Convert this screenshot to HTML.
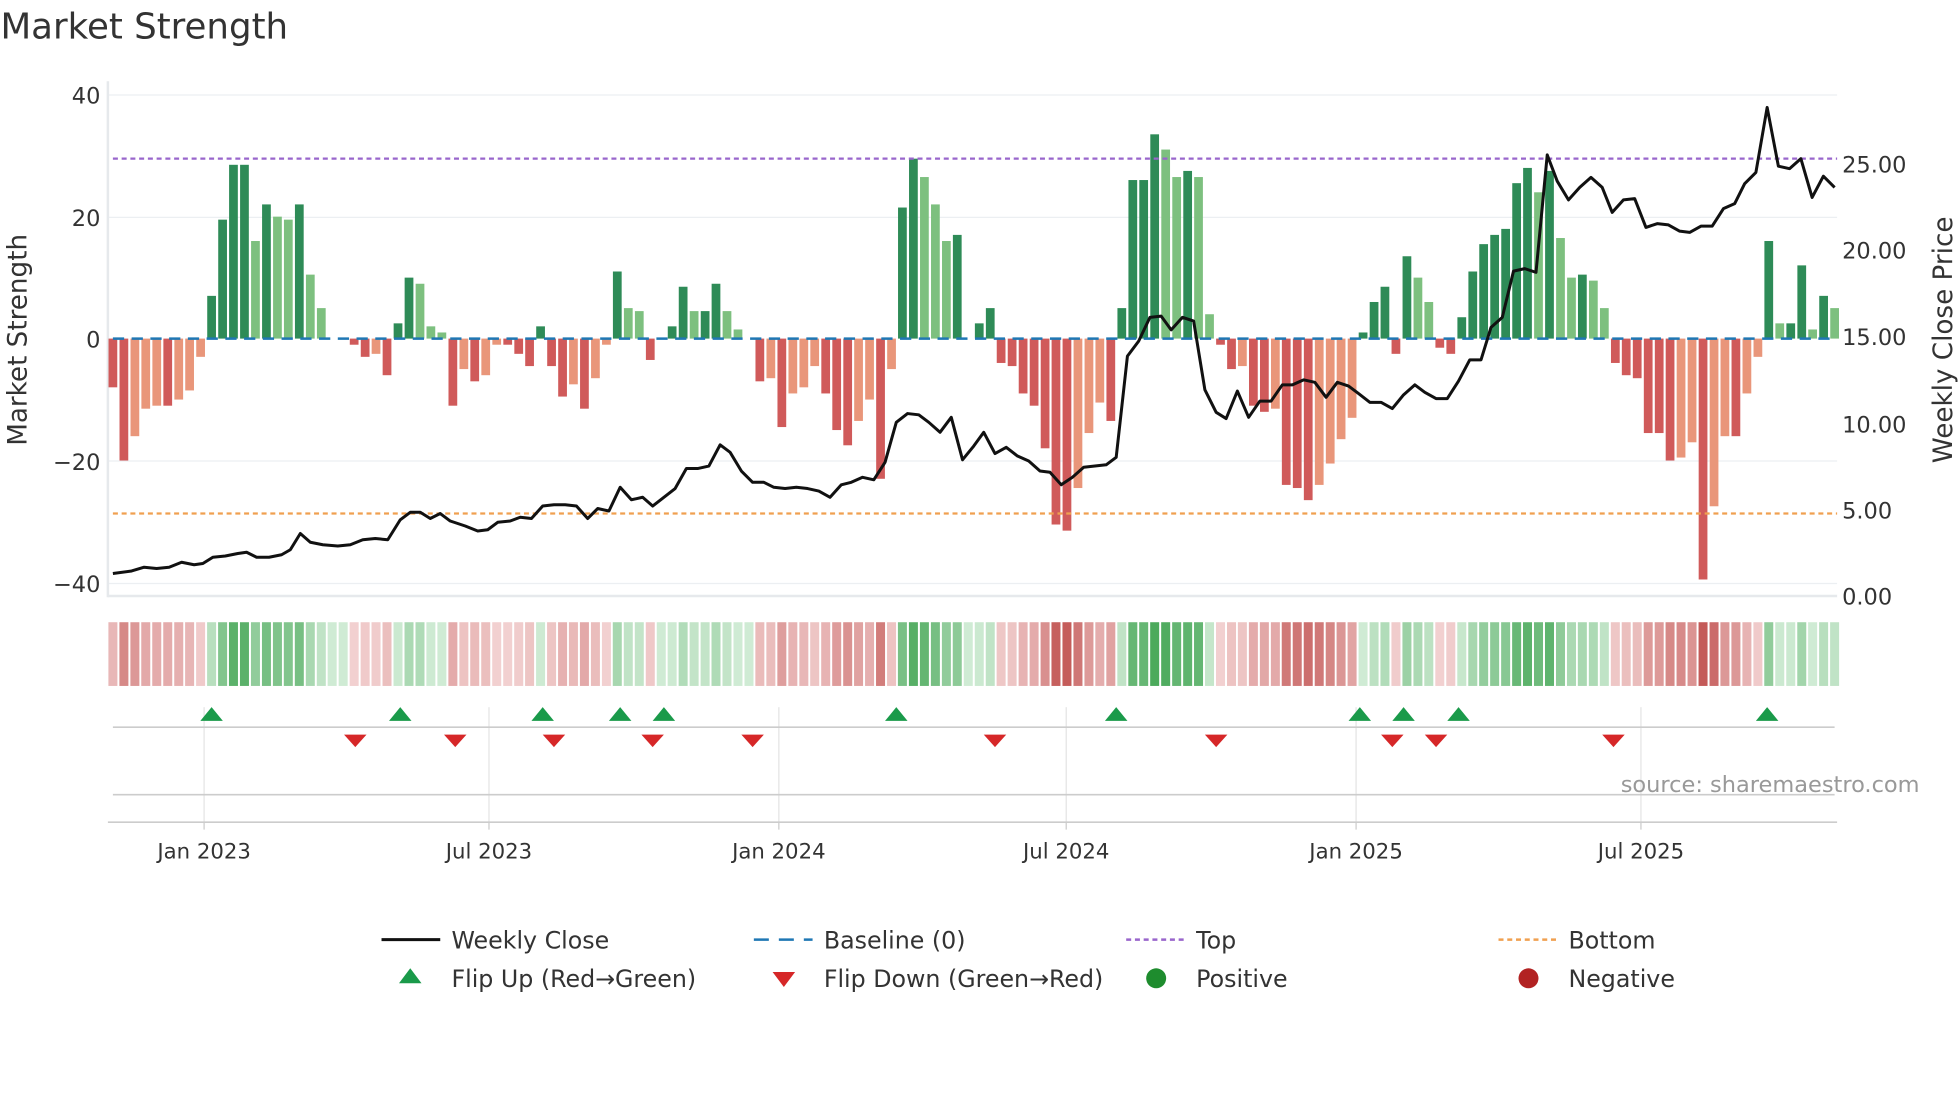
<!DOCTYPE html>
<html><head><meta charset="utf-8"><style>
html,body{margin:0;padding:0;background:#fff;width:1960px;height:1102px;overflow:hidden}
svg{display:block}
text{font-family:"DejaVu Sans","Liberation Sans",sans-serif}
</style></head><body>
<svg id="s" width="1960" height="1102" viewBox="0 0 1568 882" xmlns="http://www.w3.org/2000/svg">
<rect width="1568" height="882" fill="#fff"/>
<text x="0" y="31" font-size="28.5" fill="#333">Market Strength</text>
<g stroke="#eceff2" stroke-width="1">
<line x1="86" y1="76" x2="1470" y2="76"/><line x1="86" y1="174" x2="1470" y2="174"/>
<line x1="86" y1="369" x2="1470" y2="369"/><line x1="86" y1="467" x2="1470" y2="467"/>
<line x1="86" y1="477" x2="1470" y2="477" stroke="#e6e9ec" stroke-width="2"/>
<line x1="86" y1="65" x2="86" y2="478" stroke="#e6e9ec" stroke-width="2"/>
</g>
<g font-size="18" fill="#333" text-anchor="end">
<text x="80" y="83">40</text><text x="80" y="181">20</text><text x="80" y="278">0</text>
<text x="80" y="376">−20</text><text x="80" y="474">−40</text>
</g>
<g font-size="18" fill="#333">
<text x="1474" y="138">25.00</text><text x="1474" y="207">20.00</text><text x="1474" y="276">15.00</text>
<text x="1474" y="346">10.00</text><text x="1474" y="415">5.00</text><text x="1474" y="484">0.00</text>
</g>
<text transform="translate(21,272) rotate(-90)" font-size="21" fill="#333" text-anchor="middle">Market Strength</text>
<text transform="translate(1562,272) rotate(-90)" font-size="21" fill="#333" text-anchor="middle">Weekly Close Price</text>
<g id="bars"></g>
<line x1="90" y1="271" x2="1470" y2="271" stroke="#1f77b4" stroke-width="2" stroke-dasharray="9,6"/>
<line x1="90" y1="127" x2="1470" y2="127" stroke="#9966cc" stroke-width="1.8" stroke-dasharray="4,3"/>
<line x1="90" y1="411" x2="1470" y2="411" stroke="#f0a050" stroke-width="1.8" stroke-dasharray="4,3"/>
<polyline id="price" fill="none" stroke="#111" stroke-width="2.4" stroke-linejoin="round"/>
<g id="heat"></g>
<g stroke="#e4e4e4" stroke-width="1">
<line x1="163" y1="566" x2="163" y2="658"/><line x1="391" y1="566" x2="391" y2="658"/>
<line x1="623" y1="566" x2="623" y2="658"/><line x1="853" y1="566" x2="853" y2="658"/>
<line x1="1085" y1="566" x2="1085" y2="658"/><line x1="1313" y1="566" x2="1313" y2="658"/>
</g>
<line x1="90" y1="582" x2="1468" y2="582" stroke="#ccc" stroke-width="1.3"/>
<line x1="90" y1="636" x2="1468" y2="636" stroke="#ccc" stroke-width="1.3"/>
<line x1="86" y1="658" x2="1470" y2="658" stroke="#ccc" stroke-width="1.3"/>
<g id="flips"></g>
<text x="1536" y="634" font-size="18" fill="#999" text-anchor="end">source: sharemaestro.com</text>
<g font-size="17" fill="#333" text-anchor="middle">
<text x="163" y="687">Jan 2023</text><text x="391" y="687">Jul 2023</text><text x="623" y="687">Jan 2024</text>
<text x="853" y="687">Jul 2024</text><text x="1085" y="687">Jan 2025</text><text x="1313" y="687">Jul 2025</text>
</g>
<g stroke="#ccc"><line x1="163" y1="658" x2="163" y2="664"/><line x1="391" y1="658" x2="391" y2="664"/><line x1="623" y1="658" x2="623" y2="664"/><line x1="853" y1="658" x2="853" y2="664"/><line x1="1085" y1="658" x2="1085" y2="664"/><line x1="1313" y1="658" x2="1313" y2="664"/></g>
<g font-size="19" fill="#333">
<line x1="305" y1="752" x2="352" y2="752" stroke="#111" stroke-width="2.4"/><text x="361" y="759">Weekly Close</text>
<line x1="603" y1="752" x2="650" y2="752" stroke="#1f77b4" stroke-width="2" stroke-dasharray="12,8"/><text x="659" y="759">Baseline (0)</text>
<line x1="901" y1="752" x2="948" y2="752" stroke="#9966cc" stroke-width="2" stroke-dasharray="4,3"/><text x="957" y="759">Top</text>
<line x1="1199" y1="752" x2="1246" y2="752" stroke="#f0a050" stroke-width="2" stroke-dasharray="4,3"/><text x="1255" y="759">Bottom</text>
<polygon points="328,775 319,787 337,787" fill="#1a9a4a"/><text x="361" y="790">Flip Up (Red→Green)</text>
<polygon points="618,778 636,778 627,790" fill="#d62728"/><text x="659" y="790">Flip Down (Green→Red)</text>
<circle cx="925" cy="783" r="8" fill="#1e8c2e"/><text x="957" y="790">Positive</text>
<circle cx="1223" cy="783" r="8" fill="#b22222"/><text x="1255" y="790">Negative</text>
</g>
</svg>
<script>
(function(){
var v=[-8,-20,-16,-11.5,-11,-11,-10,-8.5,-3,7,19.5,28.5,28.5,16,22,20,19.5,22,10.5,5,0,0,-1,-3,-2.5,-6,2.5,10,9,2,1,-11,-5,-7,-6,-1,-1,-2.5,-4.5,2,-4.5,-9.5,-7.5,-11.5,-6.5,-1,11,5,4.5,-3.5,0,2,8.5,4.5,4.5,9,4.5,1.5,0,-7,-6.5,-14.5,-9,-8,-4.5,-9,-15,-17.5,-13.5,-10,-23,-5,21.5,29.5,26.5,22,16,17,0,2.5,5,-4,-4.5,-9,-11,-18,-30.5,-31.5,-24.5,-15.5,-10.5,-13.5,5,26,26,33.5,31,26.5,27.5,26.5,4,-1,-5,-4.5,-11,-12,-11.5,-24,-24.5,-26.5,-24,-20.5,-16.5,-13,1,6,8.5,-2.5,13.5,10,6,-1.5,-2.5,3.5,11,15.5,17,18,25.5,28,24,27.5,16.5,10,10.5,9.5,5,-4,-6,-6.5,-15.5,-15.5,-20,-19.5,-17,-39.5,-27.5,-16,-16,-9,-3,16,2.5,2.5,12,1.5,7,5];
var p=[90,459,105,457,115,454,125,455,135,454,145,450,155,452,162,451,170,446,180,445,190,443,197,442,205,446,215,446,225,444,232,440,240,427,248,434,258,436,270,437,280,436,290,432,300,431,310,432,320,416,328,410,336,410,344,415,352,411,360,417,372,421,382,425,390,424,398,418,408,417,416,414,425,415,434,405,443,404,452,404,461,405,470,415,478,407,487,409,496,390,505,400,514,398,522,405,531,398,540,391,549,375,558,375,567,373,576,356,584,362,593,377,602,386,611,386,619,390,628,391,637,390,646,391,655,393,664,398,673,388,681,386,690,382,699,384,708,370,717,338,726,331,735,332,743,338,752,346,761,334,770,368,779,357,787,346,796,363,805,358,814,365,823,369,832,377,840,378,849,388,858,382,867,374,876,373,885,372,893,366,902,285,911,273,920,254,929,253,937,264,946,254,955,257,964,312,973,330,981,335,990,313,999,334,1008,321,1017,321,1026,308,1034,308,1043,304,1052,306,1061,318,1070,306,1079,309,1087,315,1096,322,1105,322,1114,327,1123,316,1132,308,1140,314,1149,319,1158,319,1167,305,1176,288,1185,288,1193,262,1202,254,1211,217,1220,215,1229,218,1238,124,1246,145,1255,160,1264,150,1273,142,1282,150,1290,170,1299,160,1308,159,1317,182,1326,179,1335,180,1344,185,1352,186,1361,181,1370,181,1379,167,1388,163,1396,147,1405,138,1414,86,1423,133,1432,135,1441,127,1450,158,1459,141,1468,150];
var pts=[];for(var i=0;i<p.length;i+=2)pts.push(p[i]+","+p[i+1]);
document.getElementById("price").setAttribute("points",pts.join(" "));
var n=v.length,step=(1468-90)/(n-1),b="",h="";
function mix(a,c,t){return "rgb("+a.map(function(x,k){return Math.round(x+(c[k]-x)*t)}).join(",")+")"}
for(var i=0;i<n;i++){var x=90+i*step,val=v[i],pv=i?v[i-1]:0;
 if(val!==0){var dark=Math.abs(val)>=Math.abs(pv)||(val*pv<=0);
  var col=val>0?(dark?"#2e8b57":"#7dc07f"):(dark?"#d05a5a":"#e9967a");
  var yy=271-val*4.88,ty=Math.min(yy,271),hh=Math.abs(val*4.88);
  b+='<rect x="'+(x-3.5).toFixed(1)+'" y="'+ty.toFixed(1)+'" width="7" height="'+hh.toFixed(1)+'" fill="'+col+'"/>';}
 var t=Math.min(Math.abs(val)/32,1),c;
 if(val>=0)c=mix([214,238,218],[76,170,92],Math.max(t,0.05));else c=mix([244,214,214],[196,90,88],Math.max(t,0.05));
 h+='<rect x="'+(x-3.6).toFixed(1)+'" y="498" width="7.2" height="51" fill="'+c+'"/>';}
document.getElementById("bars").innerHTML=b;document.getElementById("heat").innerHTML=h;
var up=[169,320,434,496,531,717,893,1088,1123,1167,1414],dn=[284,364,443,522,602,796,973,1114,1149,1291],f="";
up.forEach(function(x){f+='<polygon points="'+x+',566 '+(x-9)+',577 '+(x+9)+',577" fill="#1a9a4a"/>'});
dn.forEach(function(x){f+='<polygon points="'+(x-9)+',588 '+(x+9)+',588 '+x+',598" fill="#d62728"/>'});
document.getElementById("flips").innerHTML=f;
})();
</script>
</body></html>
